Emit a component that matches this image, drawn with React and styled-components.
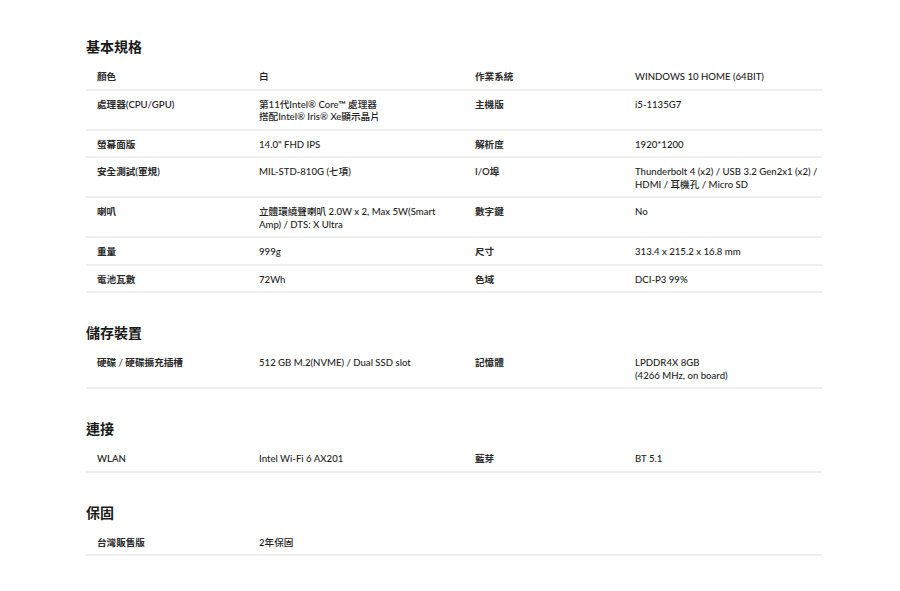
import styled, { createGlobalStyle } from "styled-components";

const GlobalStyle = createGlobalStyle`
  body {
    margin: 0;
    background: #fff;
    font-family: "Lato", "Noto Sans CJK TC", sans-serif;
    color: #222;
  }
`;

const specs = [
  {
    title: "基本規格",
    rows: [
      ["顏色", "白", "作業系統", "WINDOWS 10 HOME (64BIT)"],
      [
        "處理器(CPU/GPU)",
        "第11代Intel® Core™ 處理器\n搭配Intel® Iris® Xe顯示晶片",
        "主機版",
        "i5-1135G7",
      ],
      ["螢幕面版", "14.0\" FHD IPS", "解析度", "1920*1200"],
      [
        "安全測試(軍規)",
        "MIL-STD-810G (七項)",
        "I/O埠",
        "Thunderbolt 4 (x2) / USB 3.2 Gen2x1 (x2) /\nHDMI / 耳機孔 / Micro SD",
      ],
      [
        "喇叭",
        "立體環繞聲喇叭 2.0W x 2, Max 5W(Smart\nAmp) / DTS: X Ultra",
        "數字鍵",
        "No",
      ],
      ["重量", "999g", "尺寸", "313.4 x 215.2 x 16.8 mm"],
      ["電池瓦數", "72Wh", "色域", "DCI-P3 99%"],
    ],
  },
  {
    title: "儲存裝置",
    rows: [
      [
        "硬碟 / 硬碟擴充插槽",
        "512 GB M.2(NVME) / Dual SSD slot",
        "記憶體",
        "LPDDR4X 8GB\n(4266 MHz, on board)",
      ],
    ],
  },
  {
    title: "連接",
    rows: [["WLAN", "Intel Wi-Fi 6 AX201", "藍芽", "BT 5.1"]],
  },
  {
    title: "保固",
    rows: [["台灣販售版", "2年保固", "", ""]],
  },
];

const Page = styled.div`
  width: 736px;
  padding: 37px 0 40px 86px;
`;

const Section = styled.section`
  & + & {
    margin-top: 30px;
  }
`;

const Heading = styled.h2`
  margin: 0 0 6px;
  font-size: 14px;
  line-height: 20px;
  font-weight: 700;
  color: #1a1a1a;
`;

const Row = styled.div`
  display: grid;
  grid-template-columns: 162px 216px 160px 1fr;
  padding: 8px 0 5px 11px;
  border-bottom: 2px solid #efefef;
`;

const Cell = styled.div`
  font-size: 9.6px;
  line-height: 12.5px;
  white-space: pre;
  font-weight: ${({ $label }) => ($label ? 600 : 500)};
  color: ${({ $label }) => ($label ? "#2a2a2a" : "#1e1e1e")};
`;

export default function App() {
  return (
    <>
      <GlobalStyle />
      <Page>
        {specs.map((s) => (
          <Section key={s.title}>
            <Heading>{s.title}</Heading>
            {s.rows.map((r, i) => (
              <Row key={i}>
                {r.map((c, j) => (
                  <Cell key={j} $label={j % 2 === 0}>
                    {c}
                  </Cell>
                ))}
              </Row>
            ))}
          </Section>
        ))}
      </Page>
    </>
  );
}
